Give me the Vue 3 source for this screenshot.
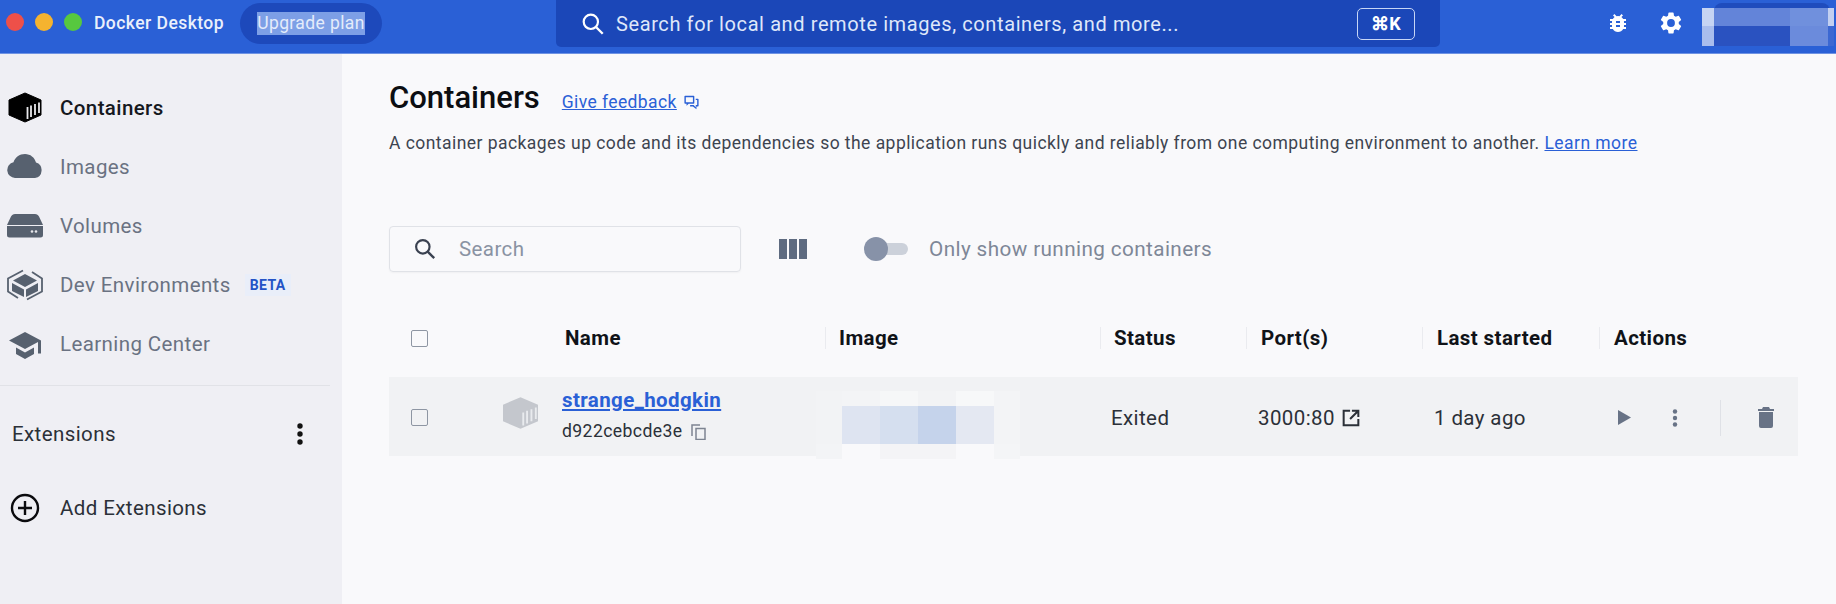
<script setup>
const nav = [
  { label: 'Images', icon: 'images' },
  { label: 'Volumes', icon: 'volumes' },
  { label: 'Dev Environments', icon: 'dev', beta: true },
  { label: 'Learning Center', icon: 'learn' }
]
const topMosaic = ['#c6d4f3', '#6384d9', '#7090dd', '#c2d0f1', '#a9bded', '#2a52c0', '#6b8bdc', '#3c68d2']
const imgMosaic = [
  '#f2f3f5', '#f3f4f6', '#f6f7f8', '#f2f3f5', '#f7f8f9', '#f3f4f6',
  '#f2f3f5', '#dee4f1', '#d5dfef', '#c5d3eb', '#e4e8f2', '#f3f4f6',
  '#f3f4f6', '#f9f9fb', '#f4f4f6', '#f4f4f6', '#f9f9fb', '#f4f5f7'
]
</script>

<template>
  <div class="app">
    <header class="topbar">
      <div class="lights">
        <span class="light red"></span>
        <span class="light yellow"></span>
        <span class="light green"></span>
      </div>
      <span class="brand">Docker Desktop</span>
      <div class="upgrade"><span class="selected">Upgrade plan</span></div>
      <div class="global-search">
        <svg class="g-icon" viewBox="0 0 24 24" width="26" height="26"><circle cx="10" cy="10" r="6.6" fill="none" stroke="#fff" stroke-width="2"/><path d="M15 15l6 6" stroke="#fff" stroke-width="2.2"/></svg>
        <span class="g-text">Search for local and remote images, containers, and more...</span>
        <span class="kbd">⌘K</span>
      </div>
      <div class="top-icons">
        <svg viewBox="0 0 24 24" width="24" height="24"><path fill="#fff" d="M20 8h-2.8c-.45-.78-1.07-1.45-1.82-1.96L17 4.41 15.59 3l-2.17 2.17a6 6 0 0 0-2.83 0L8.41 3 7 4.41l1.62 1.63C7.88 6.55 7.26 7.22 6.81 8H4v2h2.09c-.05.33-.09.66-.09 1v1H4v2h2v1c0 .34.04.67.09 1H4v2h2.81c1.04 1.79 2.97 3 5.19 3s4.15-1.21 5.19-3H20v-2h-2.09c.05-.33.09-.66.09-1v-1h2v-2h-2v-1c0-.34-.04-.67-.09-1H20V8zm-6 8h-4v-2h4v2zm0-4h-4v-2h4v2z"/></svg>
        <svg viewBox="0 0 24 24" width="26" height="26"><path fill="#fff" d="M19.14 12.94c.04-.3.06-.61.06-.94s-.02-.64-.07-.94l2.03-1.58a.49.49 0 0 0 .12-.61l-1.92-3.32a.49.49 0 0 0-.59-.22l-2.39.96a7 7 0 0 0-1.62-.94l-.36-2.54a.48.48 0 0 0-.48-.41h-3.84a.48.48 0 0 0-.47.41l-.36 2.54c-.59.24-1.13.57-1.62.94l-2.39-.96a.49.49 0 0 0-.59.22L2.74 8.87a.48.48 0 0 0 .12.61l2.03 1.58c-.05.3-.09.63-.09.94s.02.64.07.94l-2.03 1.58a.49.49 0 0 0-.12.61l1.92 3.32c.12.22.37.29.59.22l2.39-.96c.5.38 1.03.7 1.62.94l.36 2.54c.05.24.24.41.48.41h3.84c.24 0 .44-.17.47-.41l.36-2.54c.59-.24 1.13-.56 1.62-.94l2.39.96c.22.08.47 0 .59-.22l1.92-3.32a.48.48 0 0 0-.12-.61l-2.01-1.58zM12 15.6A3.6 3.6 0 1 1 12 8.4a3.6 3.6 0 0 1 0 7.2z"/></svg>
      </div>
      <div class="top-mosaic">
        <i v-for="(c, i) in topMosaic" :key="i" :style="{ background: c }"></i>
      </div>
    </header>

    <div class="body">
      <aside class="sidebar">
        <div class="nav-item active">
          <svg class="nav-icon" viewBox="0 0 36 36" width="36" height="36"><path fill="#000" stroke="#000" stroke-linejoin="round" d="M18 4l16 7v15l-16 7-16-7V11z"/><path stroke="#e8e8ec" stroke-width="1.8" d="M20.500 18v12M24 16.500V28M28 15v11M32 13.500V24"/></svg>
          <span>Containers</span>
        </div>
        <div v-for="item in nav" :key="item.label" class="nav-item">
          <svg v-if="item.icon === 'images'" class="nav-icon" viewBox="0 0 36 36" width="36" height="36"><path fill="#57616f" d="M8 29a8 8 0 0 1-1.500-15.800C8 8.500 12.500 5 18 5c5.500 0 9.500 3.500 11 8.500A8 8 0 0 1 28 29z"/></svg>
          <svg v-else-if="item.icon === 'volumes'" class="nav-icon" viewBox="0 0 36 36" width="36" height="36"><path fill="#57616f" d="M8 6h20c2 0 3 1 4 2.500l4 8.500H0l4-8.500C5 7 6 6 8 6zM0 18h36v9a2.500 2.500 0 0 1-2.500 2.500h-31A2.500 2.500 0 0 1 0 27z"/><circle cx="25" cy="23.500" r="1.300" fill="#e8e8ec"/><circle cx="29" cy="23.500" r="1.300" fill="#e8e8ec"/></svg>
          <svg v-else-if="item.icon === 'dev'" class="nav-icon" viewBox="0 0 36 36" width="36" height="36"><path fill="none" stroke="#57616f" stroke-width="1.800" d="M16 3.500L1 11.500v13L11 31M20 32.500l15-8v-13L25 5"/><path fill="#57616f" d="M18 7l12 6.500-12 6.500-12-6.500zM5 16l12 6.500V30L5 24zM31 16l-12 6.500V30l12-6z"/></svg>
          <svg v-else class="nav-icon" viewBox="0 0 36 36" width="36" height="36"><path fill="#57616f" d="M18 6L2 14.500 18 23l13-7v11.500h3V14.500zM9 21.500v6.500l9 5 9-5v-6.500L18 26.500z"/></svg>
          <span>{{ item.label }}</span>
          <span v-if="item.beta" class="beta">BETA</span>
        </div>
        <div class="divider"></div>
        <div class="ext-row">
          <span>Extensions</span>
          <svg viewBox="0 0 8 24" width="8" height="24"><circle cx="4" cy="4" r="2.700" fill="#111"/><circle cx="4" cy="12" r="2.700" fill="#111"/><circle cx="4" cy="20" r="2.700" fill="#111"/></svg>
        </div>
        <div class="add-row">
          <svg viewBox="0 0 30 30" width="30" height="30"><circle cx="15" cy="15" r="13" fill="none" stroke="#0b0b0e" stroke-width="2.400"/><path stroke="#0b0b0e" stroke-width="2.400" d="M15 8v14M8 15h14"/></svg>
          <span>Add Extensions</span>
        </div>
      </aside>

      <main class="main">
        <div class="title-row">
          <h1>Containers</h1>
          <a class="link feedback">Give feedback</a>
          <svg viewBox="0 0 24 24" width="17" height="17"><path fill="#2a60d6" d="M15 4H3a1 1 0 0 0-1 1v9a1 1 0 0 0 1 1h2v3l3-3h7a1 1 0 0 0 1-1V5a1 1 0 0 0-1-1zm-1 9H4V6h10zm7-5h-3v2h2v7h-2v3l-3-3h-5v2h4l5 4v-4h2a1 1 0 0 0 1-1V9a1 1 0 0 0-1-1z"/></svg>
        </div>
        <p class="desc">A container packages up code and its dependencies so the application runs quickly and reliably from one computing environment to another. <a class="link">Learn more</a></p>

        <div class="toolbar">
          <div class="search-box">
            <svg viewBox="0 0 24 24" width="26" height="26"><circle cx="10" cy="10" r="6.200" fill="none" stroke="#3a4150" stroke-width="2"/><path d="M14.500 14.500l6 6" stroke="#3a4150" stroke-width="2.200"/></svg>
            <span>Search</span>
          </div>
          <div class="cols-icon"><i></i><i></i><i></i></div>
          <div class="toggle"><span class="track"></span><span class="thumb"></span></div>
          <span class="toggle-label">Only show running containers</span>
        </div>

        <div class="grid head">
          <div class="c-check"><span class="checkbox"></span></div>
          <div class="c-name">Name</div>
          <div class="c-image sep">Image</div>
          <div class="c-status sep">Status</div>
          <div class="c-ports sep">Port(s)</div>
          <div class="c-last sep">Last started</div>
          <div class="c-actions sep">Actions</div>
        </div>

        <div class="grid row">
          <div class="c-check"><span class="checkbox"></span></div>
          <div class="c-name name-cell">
            <svg class="box-icon" viewBox="2 4 32 29" width="35" height="32"><path fill="#c4c7cd" d="M18 4l16 7v15l-16 7-16-7V11z"/><path stroke="#e9ebee" stroke-width="1.700" d="M20.500 18v12M24 16.500V28M28 15v11M32 13.500V24"/></svg>
            <div class="name-text">
              <a class="link strong">strange_hodgkin</a>
              <div class="cid">d922cebcde3e
                <svg viewBox="0 0 15 16" width="15" height="16"><path fill="none" stroke="#7d8491" stroke-width="1.500" d="M5 4.500h9v11H5zM1 12V1h8"/></svg>
              </div>
            </div>
          </div>
          <div class="c-image mosaic-cell">
            <div class="img-mosaic"><i v-for="(c, i) in imgMosaic" :key="i" :style="{ background: c }"></i></div>
          </div>
          <div class="c-status val">Exited</div>
          <div class="c-ports val port">3000:80
            <svg viewBox="0 0 24 24" width="22" height="22"><path fill="none" stroke="#2b3038" stroke-width="2.200" d="M11 4H4v16h16v-7M13 4h7v7M20 4l-9 9"/></svg>
          </div>
          <div class="c-last val last">1 day ago</div>
          <div class="c-actions action-cell">
            <svg class="play" viewBox="0 0 13 15" width="13" height="15"><path fill="#687386" d="M0 0l13 7.500L0 15z"/></svg>
            <svg class="more" viewBox="0 0 6 18" width="6" height="18"><circle cx="3" cy="2.500" r="2.200" fill="#687386"/><circle cx="3" cy="9" r="2.200" fill="#687386"/><circle cx="3" cy="15.500" r="2.200" fill="#687386"/></svg>
            <span class="vline"></span>
            <svg class="trash" viewBox="0 0 16 21" width="16" height="21"><path fill="#687386" d="M1 5h14v14a2 2 0 0 1-2 2H3a2 2 0 0 1-2-2zM5 0h6l1 2h4v2H0V2h4z"/></svg>
          </div>
        </div>
      </main>
    </div>
  </div>
</template>

<style>
html, body { margin: 0; background: #f9f9fb; }
</style>

<style scoped>
.app { width: 1836px; height: 604px; overflow: hidden; display: flex; flex-direction: column; font-family: Roboto, "Liberation Sans", sans-serif; letter-spacing: 0.4px; color: #1a1d23; }
.topbar { height: 54px; flex: none; box-sizing: border-box; background: #2a60d6; display: flex; align-items: flex-start; border-bottom: 1px solid #6f93e3; }
.lights { display: flex; gap: 11px; margin: 13px 0 0 6px; width: 88px; flex: none; }
.light { width: 18px; height: 18px; border-radius: 50%; flex: none; }
.red { background: #ee5049; }
.yellow { background: #f5b32f; }
.green { background: #57c83f; }
.brand { color: #eaf0fc; font-size: 17.5px; font-weight: 500; letter-spacing: 0.45px; margin: 13px 0 0; width: 146px; flex: none; line-height: 20px; white-space: nowrap; }
.upgrade { margin: 3px 0 0; width: 142px; height: 41px; flex: none; border-radius: 21px; background: #1d49bb; display: flex; align-items: center; justify-content: center; }
.selected { background: #7d9fe6; color: #e4ecfb; font-size: 17.5px; line-height: 23px; white-space: nowrap; }
.global-search { margin-left: 174px; width: 884px; height: 47px; flex: none; box-sizing: border-box; background: #1b47b8; border-radius: 0 0 5px 5px; display: flex; align-items: center; padding: 0 25px 0 24px; color: #dfe7fa; }
.g-icon { flex: none; margin-right: 10px; }
.g-text { font-size: 20px; letter-spacing: 0.6px; flex: 1; white-space: nowrap; }
.kbd { width: 58px; height: 32px; box-sizing: border-box; border: 1.500px solid #c7d6f6; border-radius: 5px; color: #fff; font-size: 18px; font-weight: 700; display: flex; align-items: center; justify-content: center; }
.top-icons { display: flex; align-items: center; gap: 28px; margin: 10px 0 0 166px; flex: none; }
.top-mosaic { position: relative; display: grid; grid-template-columns: 12px 76px 38px 6px; grid-template-rows: 18px 20px; margin: 8px 0 0 18px; flex: none; }
.top-mosaic::before { content: ""; position: absolute; left: 12px; right: 4px; top: -5px; height: 12px; border-radius: 8px 8px 0 0; background: #1f4cbd; z-index: 0; }
.top-mosaic i { display: block; position: relative; }

.body { flex: 1; display: flex; min-height: 0; }
.sidebar { width: 342px; flex: none; background: #efeff4; box-sizing: border-box; padding-top: 29px; }
.nav-item { height: 59px; display: flex; align-items: center; padding-left: 7px; color: #6a7282; font-size: 20.5px; }
.nav-icon { flex: none; margin-right: 17px; }
.nav-item.active { color: #15181e; font-weight: 500; height: 48px; margin-bottom: 6px; }
.nav-item.active span { position: relative; top: 1px; }
.beta { margin-left: 14px; padding: 3px 5px; background: #e9eef9; color: #2453c6; font-size: 14px; font-weight: 700; }
.divider { width: 330px; height: 1px; background: #e1e2e7; margin-top: 12px; }
.ext-row { height: 107px; box-sizing: border-box; padding: 36px 38px 0 12px; display: flex; justify-content: space-between; align-items: flex-start; font-size: 20.5px; color: #2b3038; }
.add-row { display: flex; align-items: center; gap: 20px; padding-left: 10px; font-size: 20.5px; color: #2b3038; }

.main { flex: 1; padding: 0 38px 0 47px; box-sizing: border-box; min-width: 0; }
.title-row { display: flex; align-items: center; margin-top: 25px; height: 36px; }
h1 { margin: 0; font-size: 31px; font-weight: 500; color: #0c0e12; letter-spacing: 0; flex: none; }
.link { color: #2a60d6; text-decoration: underline; }
.feedback { font-size: 17.5px; margin: 9px 6px 0 22px; }
.title-row svg { margin-top: 9px; }
.desc { margin: 18px 0 0; font-size: 17.5px; letter-spacing: 0.45px; line-height: 20px; color: #3d4450; white-space: nowrap; }
.toolbar { display: flex; align-items: center; margin-top: 73px; height: 46px; }
.search-box { width: 352px; height: 46px; box-sizing: border-box; border: 1px solid #e0e2e7; border-radius: 4px; display: flex; align-items: center; padding-left: 22px; gap: 21px; color: #8a93a3; font-size: 20.5px; box-shadow: 0 1px 2px rgba(0,0,0,.04); }
.cols-icon { display: flex; gap: 2px; margin-left: 38px; }
.cols-icon i { width: 8px; height: 20px; background: #5e6b80; display: block; }
.toggle { position: relative; width: 44px; height: 24px; margin-left: 57px; }
.track { position: absolute; left: 6px; right: 0; top: 6px; height: 12px; border-radius: 6px; background: #ccd1da; }
.thumb { position: absolute; left: 0; top: 0; width: 24px; height: 24px; border-radius: 50%; background: #8792a8; }
.toggle-label { margin-left: 21px; font-size: 20.7px; color: #7e8797; white-space: nowrap; }

.grid { display: grid; grid-template-columns: 176px 260px 275px 146px 176px 177px 1fr; align-items: center; }
.head { margin-top: 46px; height: 40px; font-weight: 700; font-size: 20.5px; color: #101318; }
.c-check { padding-left: 22px; display: flex; align-items: center; }
.checkbox { width: 15px; height: 15px; border: 1.500px solid #8e96a3; border-radius: 2px; display: block; }
.head .c-image, .head .c-status, .head .c-ports, .head .c-last, .head .c-actions { padding-left: 14px; }
.head .c-image, .head .c-status { padding-left: 13px; }
.sep { border-left: 1px solid #eaebef; height: 22px; line-height: 22px; }
.row { margin-top: 19px; height: 79px; box-sizing: border-box; padding-top: 2px; background: #f1f2f4; font-size: 20.5px; color: #2b3038; }
.name-cell { display: flex; align-items: center; }
.box-icon { margin: 0 24px 10px -62px; flex: none; }
.name-text { line-height: 1; margin-top: -4px; }
.strong { font-weight: 700; font-size: 20.5px; white-space: nowrap; }
.cid { font-size: 17.6px; margin-top: 13px; display: flex; align-items: center; gap: 9px; color: #2b3038; white-space: nowrap; }
.mosaic-cell { display: flex; align-items: center; height: 0; }
.img-mosaic { display: grid; grid-template-columns: 26px 38px 38px 38px 38px 26px; grid-template-rows: 15px 38px 15px; margin-left: -9px; position: relative; top: 7px; }
.img-mosaic i { display: block; }
.val { padding-left: 11px; }
.port { display: flex; align-items: center; gap: 5px; padding-left: 12px; white-space: nowrap; }
.last { padding-left: 12px; }
.action-cell { display: flex; align-items: center; padding-left: 19px; }
.play { flex: none; }
.more { flex: none; margin-left: 41px; }
.vline { width: 1px; height: 36px; background: #dfe1e6; margin-left: 42px; flex: none; }
.trash { flex: none; margin-left: 37px; }
</style>
